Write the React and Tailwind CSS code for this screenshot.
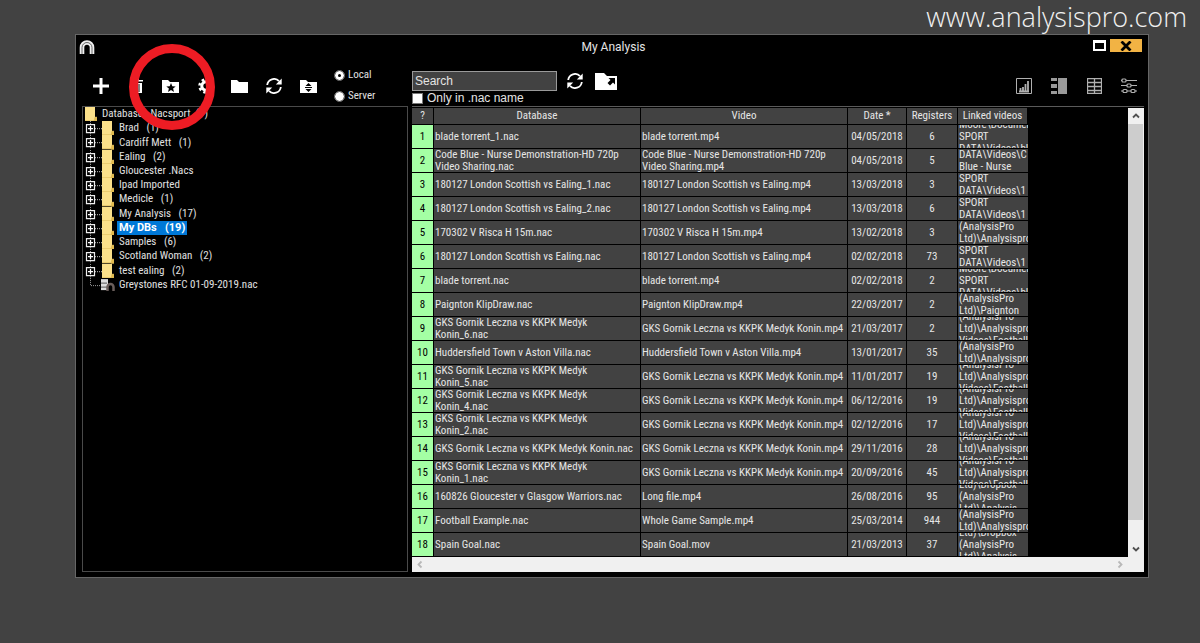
import React from "react";

const UI = "font-['Roboto_Condensed','Roboto','Liberation_Sans',sans-serif]";

function Folder({ className, children }) {
  return (
    <svg viewBox="0 0 17 14" className={className} aria-hidden="true">
      <path d="M0 1h6l2 2h9v11H0z" fill="#fff" />
      {children}
    </svg>
  );
}

function Refresh() {
  return (
    <svg viewBox="0 0 16 16" className="size-4" aria-hidden="true">
      <path d="M1.200 7A6.800 6.800 0 0 1 13 3.200M14.800 9A6.800 6.800 0 0 1 3 12.800" fill="none" stroke="#fff" strokeWidth="1.800" />
      <path d="M15.700 .6v5.900H9.800zM.3 15.400V9.500H6.200z" fill="#fff" />
    </svg>
  );
}

function Gear() {
  return (
    <svg viewBox="0 0 16 16" className="size-4" aria-hidden="true">
      <circle cx="8" cy="8" r="4.200" fill="none" stroke="#fff" strokeWidth="3" />
      <circle cx="8" cy="8" r="6.500" fill="none" stroke="#fff" strokeWidth="2.500" strokeDasharray="2.550 2.550" />
    </svg>
  );
}

function Trash() {
  return (
    <svg viewBox="0 0 12 16" className="h-4 w-3" aria-hidden="true">
      <path d="M0 2h4V1h4v1h4v1.500H0zM1 5h10v10H1z" fill="#fff" />
      <path d="M4 6v8M8 6v8" stroke="#000" />
    </svg>
  );
}

function IconButton({ label, children, className = "" }) {
  return (
    <button type="button" aria-label={label} className={`flex h-5 items-center justify-center ${className}`}>
      {children}
    </button>
  );
}

function TitleBar() {
  return (
    <div className="grid h-[21px] grid-cols-[1fr_auto_1fr] items-center pl-[3px]">
      <svg viewBox="0 0 16 14" className="mt-[3px] h-[14px] w-4" aria-hidden="true">
        <path d="M3 14V7.500a5 5 0 0 1 10 0V14" fill="none" stroke="#f0f0f0" strokeWidth="4.600" />
        <path d="M3 14V7.500a5 5 0 0 1 10 0V14" fill="none" stroke="#444" strokeWidth=".8" />
      </svg>
      <h1 className="pt-[2px] font-['Roboto',sans-serif] text-xs text-[#e4e4e4]">My Analysis</h1>
      <div className="mr-[6px] flex items-center justify-end gap-1">
        <button type="button" aria-label="Maximize" className="h-[11px] w-[13px] border-2 border-t-[3px] border-white bg-black" />
        <button type="button" aria-label="Close" className="flex h-[13px] w-8 items-center justify-center bg-[#f2b344]">
          <svg viewBox="0 0 12 10" className="h-[10px] w-3" aria-hidden="true">
            <path d="M1.500 .5l9 9M10.500 .5l-9 9" stroke="#000" strokeWidth="2.800" />
          </svg>
        </button>
      </div>
    </div>
  );
}

function Radio({ label, defaultChecked }) {
  return (
    <label className="flex h-[21px] items-center gap-1 text-[11px] text-[#e0e0e0]">
      <input
        type="radio"
        name="source"
        defaultChecked={defaultChecked}
        className="size-[9px] appearance-none rounded-full bg-white outline outline-[#777] checked:border-[3px] checked:border-white checked:bg-black"
      />
      {label}
    </label>
  );
}

function LeftToolbar() {
  return (
    <div className="flex h-[50px] items-center pl-[9px] pt-[10px]">
      <IconButton label="Add" className="w-5">
        <svg viewBox="0 0 16 16" className="size-4" aria-hidden="true">
          <path d="M8 0v16M0 8h16" stroke="#fff" strokeWidth="3" />
        </svg>
      </IconButton>
      <IconButton label="Delete" className="ml-4 w-5"><Trash /></IconButton>
      <IconButton label="Favourites" className="ml-[13px] w-5">
        <Folder className="h-[14px] w-[17px]">
          <path d="M9 4l1.300 3.200 3.400.2-2.600 2.200.9 3.400-3-1.900L6 13l.9-3.400-2.600-2.200 3.400-.2z" fill="#000" />
        </Folder>
      </IconButton>
      <IconButton label="Settings" className="ml-4 w-5"><Gear /></IconButton>
      <IconButton label="New folder" className="ml-[13px] w-5"><Folder className="h-[14px] w-[17px]" /></IconButton>
      <IconButton label="Refresh databases" className="ml-[15px] w-5"><Refresh /></IconButton>
      <IconButton label="Sort folders" className="ml-[14px] w-5">
        <Folder className="h-[14px] w-[17px]">
          <path d="M8.500 4l3 3h-6zM8.500 13l3-3h-6zM5 8h7v1H5z" fill="#000" />
        </Folder>
      </IconButton>
      <div className="ml-[17px] flex flex-col">
        <Radio label="Local" defaultChecked />
        <Radio label="Server" />
      </div>
    </div>
  );
}

const folders = [
  ["Brad", 1], ["Cardiff Mett", 1], ["Ealing", 2], ["Gloucester .Nacs"], ["Ipad Imported"], ["Medicle", 1],
  ["My Analysis", 17], ["My DBs", 19], ["Samples", 6], ["Scotland Woman", 2], ["test ealing", 2],
];

function YellowFolder() {
  return (
    <svg viewBox="0 0 12 14" preserveAspectRatio="none" className="h-full w-3 shrink-0" aria-hidden="true">
      <path d="M0 0h10v10h2v4H0z" fill="#fbe08a" />
      <path d="M10 10h2v4h-3zM0 13.500h10" fill="#e3bb4c" stroke="#d9b553" strokeWidth=".6" />
    </svg>
  );
}

function Tree() {
  return (
    <div className="flex-1 border border-[#4a4a4a] pl-[2px]">
      <ul className="grid h-[185px] auto-rows-fr text-[11px] leading-[14px] text-[#e0e0e0]">
        <li className="flex items-center gap-[5px] whitespace-pre"><YellowFolder />Databases Nacsport  (7)</li>
        {folders.map(([name, count]) => (
          <li key={name} className="flex items-center">
            <svg viewBox="0 0 17 14" className="h-full w-[17px] shrink-0" preserveAspectRatio="none" aria-hidden="true">
              <path d="M5.500 0v14M10 7.500h7" stroke="#999" strokeDasharray="1 1" />
              <path d="M1.500 3.500h8v8h-8z" fill="#000" stroke="#eee" strokeWidth="1.200" />
              <path d="M3 7.500h5M5.500 5v5" stroke="#fff" strokeWidth="1.300" />
            </svg>
            <YellowFolder />
            <span
              className={
                name === "My DBs"
                  ? "ml-[3px] whitespace-pre bg-[#0078d7] px-[2px] font-['Roboto',sans-serif] font-bold text-white"
                  : "ml-[5px] whitespace-pre"
              }
            >
              {count ? `${name}   (${count})` : name}
            </span>
          </li>
        ))}
        <li className="flex items-center">
          <svg viewBox="0 0 31 14" className="h-full w-[31px] shrink-0" aria-hidden="true">
            <path d="M5.500 0v7.500H16" fill="none" stroke="#999" strokeDasharray="1 1" />
            <path d="M16 1h7v11h-7z" fill="#ddd" />
            <path d="M16 5h6M16 9h6" stroke="#555" />
            <path d="M22.500 13V9a3 3 0 0 1 6 0v4" fill="none" stroke="#6b5f5c" strokeWidth="2.500" />
          </svg>
          <span className="ml-[3px]">Greystones RFC 01-09-2019.nac</span>
        </li>
      </ul>
    </div>
  );
}

function RightToolbar() {
  return (
    <div className="flex h-[50px] items-start justify-between pr-[5px]">
      <div>
        <div className="mt-[15px] flex items-center">
          <input
            aria-label="Search"
            defaultValue="Search"
            className="h-5 w-[145px] border border-[#9a9a9a] bg-[#424242] px-[2px] font-['Liberation_Sans',sans-serif] text-xs text-[#e4e4e4] outline-none"
          />
          <IconButton label="Refresh list" className="ml-2 w-5"><Refresh /></IconButton>
          <IconButton label="Open folder" className="ml-[9px] w-6">
            <svg viewBox="0 0 22 17" className="h-[17px] w-[22px]" aria-hidden="true">
              <path d="M0 0h9l3 3h10v14H0z" fill="#fff" />
              <path d="M13.500 5H20v6.500l-2-2-3 3-2.500-2.500 3-3z" fill="#000" />
            </svg>
          </IconButton>
        </div>
        <label className="flex h-[14px] items-center gap-1 font-['Liberation_Sans',sans-serif] text-xs text-[#e4e4e4]">
          <input type="checkbox" className="size-[11px] appearance-none border border-[#777] bg-white" />
          Only in .nac name
        </label>
      </div>
      <div className="mt-5 flex gap-[15px]">
        <IconButton label="Statistics" className="w-5">
          <svg viewBox="0 0 16 16" className="size-4" aria-hidden="true">
            <path d="M.5 .5h15v15H.5z" fill="none" stroke="#b0b0b0" />
            <path d="M3 13.500h10M4.500 10v3M7 9v4M9.500 6v7M12 3v10" stroke="#b0b0b0" strokeWidth="1.800" />
          </svg>
        </IconButton>
        <IconButton label="Side view" className="w-5">
          <svg viewBox="0 0 16 16" className="size-4" aria-hidden="true">
            <path d="M0 0h6v3H0zM0 6h6v4H0zM0 13h6v3H0zM7 0h9v16H7z" fill="#9a9a9a" />
          </svg>
        </IconButton>
        <IconButton label="Table view" className="w-5">
          <svg viewBox="0 0 15 16" className="h-4 w-[15px]" aria-hidden="true">
            <path d="M.5 .5h14v15H.5zM7.500 0v16M0 4.500h15M0 8.500h15M0 12.500h15" fill="none" stroke="#b0b0b0" strokeWidth="1.300" />
          </svg>
        </IconButton>
        <IconButton label="Options" className="w-5">
          <svg viewBox="0 0 16 16" className="size-4" aria-hidden="true">
            <path d="M0 2.500h1M5 2.500h11M0 7.500h6M10 7.500h6M0 13h2M6 13h4M14 13h2" stroke="#b0b0b0" strokeWidth="1.200" />
            <g fill="none" stroke="#b0b0b0" strokeWidth="1.200">
              <rect x="1" y="1" width="4" height="3" rx="1" />
              <rect x="6" y="6" width="4" height="3" rx="1" />
              <rect x="2" y="11.500" width="4" height="3" rx="1" />
              <rect x="10" y="11.500" width="4" height="3" rx="1" />
            </g>
          </svg>
        </IconButton>
      </div>
    </div>
  );
}

const gks = "GKS Gornik Leczna vs KKPK Medyk";
const ealing = "180127 London Scottish vs Ealing";
const moore = ["Moore\\Documents", "SPORT", "DATA\\Videos\\bl"];
const sport = ["SPORT", "DATA\\Videos\\1"];
const pro = ["(AnalysisPro", "Ltd)\\Analysispro"];
const football = ["(AnalysisPro", "Ltd)\\Analysispro", "Videos\\Football"];
const dropbox = ["Ltd)\\Dropbox", "(AnalysisPro", "Ltd)\\Analysis"];

const rows = [
  [["blade torrent_1.nac"], ["blade torrent.mp4"], "04/05/2018", 6, moore],
  [["Code Blue - Nurse Demonstration-HD 720p", "Video Sharing.nac"], ["Code Blue - Nurse Demonstration-HD 720p", "Video Sharing.mp4"], "04/05/2018", 5, ["DATA\\Videos\\C", "Blue - Nurse"]],
  [[ealing + "_1.nac"], [ealing + ".mp4"], "13/03/2018", 3, sport],
  [[ealing + "_2.nac"], [ealing + ".mp4"], "13/03/2018", 6, sport],
  [["170302 V Risca H 15m.nac"], ["170302 V Risca H 15m.mp4"], "13/02/2018", 3, pro],
  [[ealing + ".nac"], [ealing + ".mp4"], "02/02/2018", 73, sport],
  [["blade torrent.nac"], ["blade torrent.mp4"], "02/02/2018", 2, moore],
  [["Paignton KlipDraw.nac"], ["Paignton KlipDraw.mp4"], "22/03/2017", 2, ["(AnalysisPro", "Ltd)\\Paignton"]],
  [[gks, "Konin_6.nac"], [gks + " Konin.mp4"], "21/03/2017", 2, football],
  [["Huddersfield Town v Aston Villa.nac"], ["Huddersfield Town v Aston Villa.mp4"], "13/01/2017", 35, pro],
  [[gks, "Konin_5.nac"], [gks + " Konin.mp4"], "11/01/2017", 19, football],
  [[gks, "Konin_4.nac"], [gks + " Konin.mp4"], "06/12/2016", 19, football],
  [[gks, "Konin_2.nac"], [gks + " Konin.mp4"], "02/12/2016", 17, football],
  [[gks + " Konin.nac"], [gks + " Konin.mp4"], "29/11/2016", 28, football],
  [[gks, "Konin_1.nac"], [gks + " Konin.mp4"], "20/09/2016", 45, football],
  [["160826 Gloucester v Glasgow Warriors.nac"], ["Long file.mp4"], "26/08/2016", 95, dropbox],
  [["Football Example.nac"], ["Whole Game Sample.mp4"], "25/03/2014", 944, pro],
  [["Spain Goal.nac"], ["Spain Goal.mov"], "21/03/2013", 37, dropbox],
];

function Lines({ lines, className = "pl-px" }) {
  return (
    <div className={`flex h-[23px] flex-col justify-center overflow-hidden whitespace-nowrap leading-3 ${className}`}>
      {lines.map((line) => <div key={line} className="h-3 shrink-0">{line}</div>)}
    </div>
  );
}

function DatabaseTable() {
  const cell = "border-b border-r border-black p-0";
  return (
    <table className="w-[616px] shrink-0 table-fixed border-separate border-spacing-0 self-start bg-[#424242] text-[11px] text-[#e6e6e6]">
      <colgroup>
        <col className="w-[22px]" />
        <col className="w-[207px]" />
        <col className="w-[207px]" />
        <col className="w-[59px]" />
        <col className="w-[51px]" />
        <col className="w-[70px]" />
      </colgroup>
      <thead>
        <tr>
          {["?", "Database", "Video", "Date *", "Registers", "Linked videos"].map((name) => (
            <th key={name} scope="col" className={`${cell} h-[17px] whitespace-nowrap font-normal leading-4`}>{name}</th>
          ))}
        </tr>
      </thead>
      <tbody>
        {rows.map(([db, video, date, registers, linked], i) => (
          <tr key={i}>
            <td className={`${cell} bg-[#a4ffa4] text-black`}><Lines lines={[i + 1]} className="text-center" /></td>
            <td className={cell}><Lines lines={db} /></td>
            <td className={cell}><Lines lines={video} /></td>
            <td className={cell}><Lines lines={[date]} className="text-center" /></td>
            <td className={cell}><Lines lines={[registers]} className="text-center" /></td>
            <td className="border-b border-black p-0"><Lines lines={linked} /></td>
          </tr>
        ))}
      </tbody>
    </table>
  );
}

function Chevron({ d, stroke }) {
  return (
    <svg viewBox="0 0 16 16" className="size-4 shrink-0" aria-hidden="true">
      <path d={d} fill="none" stroke={stroke} strokeWidth="1.800" />
    </svg>
  );
}

function Results() {
  return (
    <div className="border-t border-[#5a5a5a] pt-px">
      <div className="flex justify-between">
        <DatabaseTable />
        <div className="flex w-4 flex-col bg-[#f0f0f0]">
          <Chevron d="M5 9.500l3-3 3 3" stroke="#505050" />
          <div className="mr-px flex-1 bg-[#cdcdcd]" />
          <div className="h-[21px]" />
          <Chevron d="M5 6.500l3 3 3-3" stroke="#505050" />
        </div>
      </div>
      <div className="flex h-[15px] justify-between bg-[#f0f0f0] pr-4">
        <Chevron d="M9.500 4.500l-3 3 3 3" stroke="#b8b8b8" />
        <Chevron d="M6.500 4.500l3 3-3 3" stroke="#b8b8b8" />
      </div>
    </div>
  );
}

export default function App() {
  return (
    <div className={`min-h-screen bg-[#424242] ${UI}`}>
      <header className="flex h-[34px] items-center justify-end pr-[13px] font-['Open_Sans',sans-serif] text-[27px] font-light text-[#f0f0f0]">
        www.analysispro.com
      </header>
      <main className="relative ml-[75px] mr-[51px] border border-[#666] bg-black pb-[5px]">
        <TitleBar />
        <div className="flex gap-1 pl-[6px] pr-1">
          <section className="flex w-[326px] shrink-0 flex-col">
            <LeftToolbar />
            <Tree />
          </section>
          <section className="min-w-0 flex-1">
            <RightToolbar />
            <Results />
          </section>
        </div>
        <div className="pointer-events-none absolute left-[53px] top-[9px] size-[86px] rounded-full border-[9px] border-[#ed1c24]" />
      </main>
    </div>
  );
}
